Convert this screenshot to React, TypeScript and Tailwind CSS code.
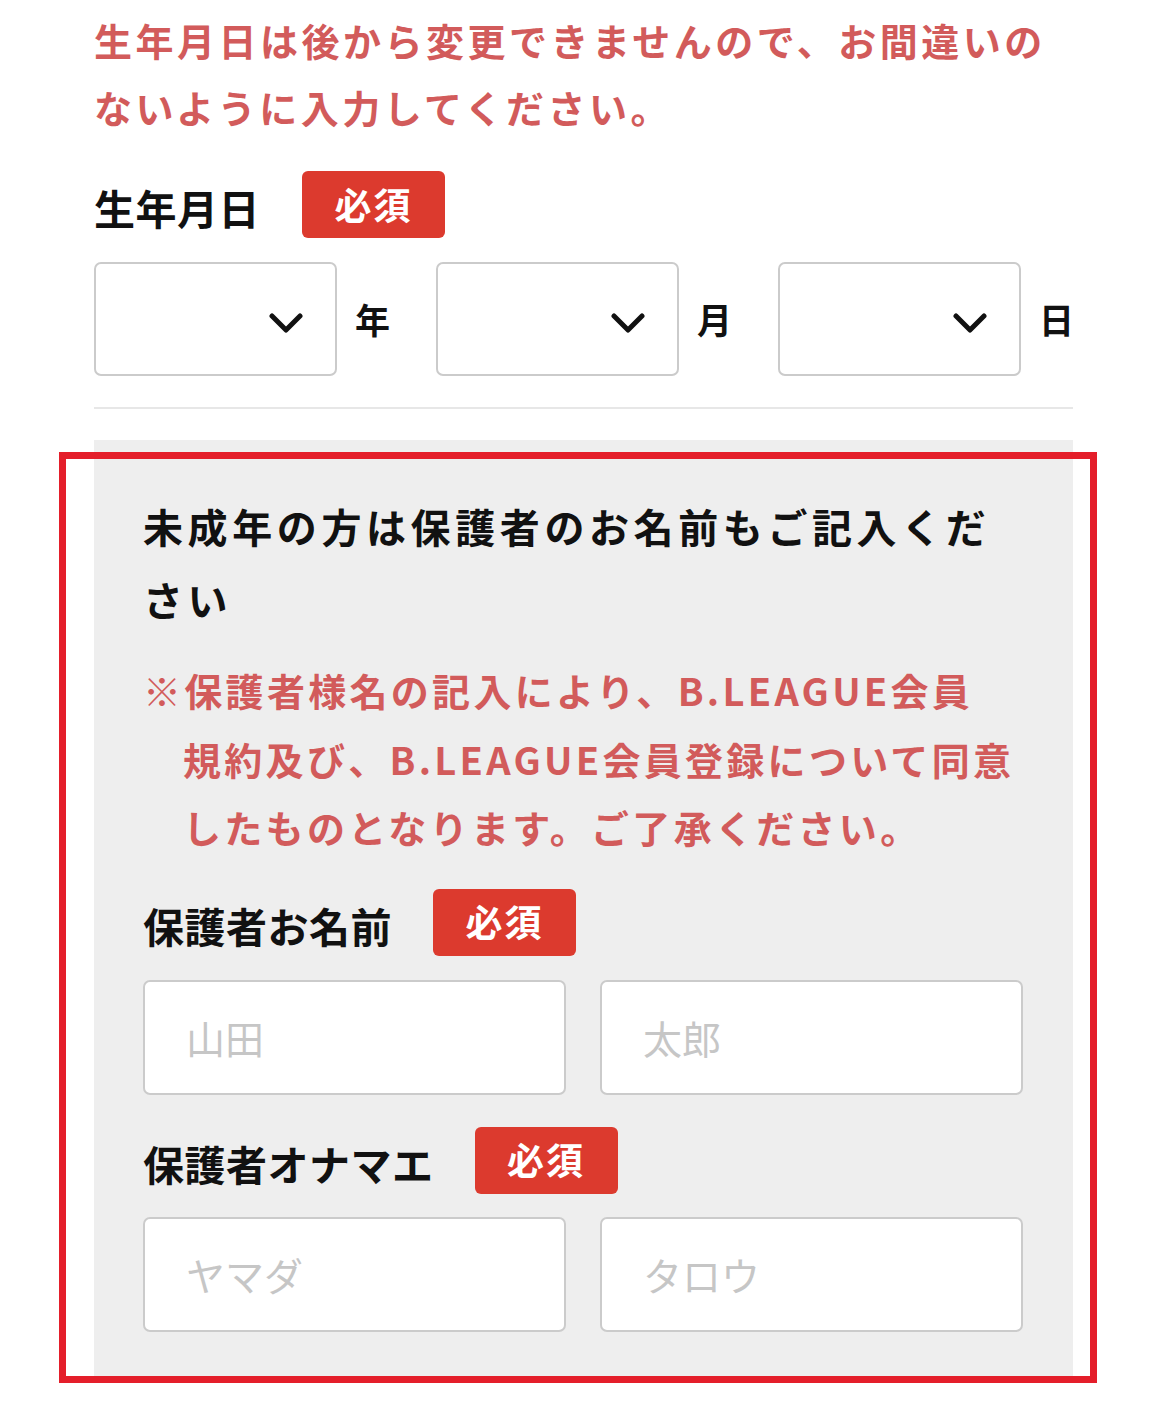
const font = { fontFamily: '"Noto Sans CJK JP", "Noto Sans", sans-serif' };

function Badge() {
  return (
    <span className="flex h-[67px] w-[143px] items-center justify-center rounded-[6px] bg-[#dc3a2e] text-[37px] font-bold tracking-[2px] text-white">
      必須
    </span>
  );
}

function Label({ text, gap = "ml-[41px]" }: { text: string; gap?: string }) {
  return (
    <div className="flex h-[67px] items-center">
      <span className="pt-[6px] text-[41px] font-bold leading-none tracking-[0.5px] text-[#111]">{text}</span>
      <span className={gap}>
        <Badge />
      </span>
    </div>
  );
}

function Chevron() {
  return (
    <svg width="34" height="20" viewBox="0 0 34 20" fill="none">
      <polyline points="3,3 17,17 31,3" stroke="#111" strokeWidth="5" strokeLinecap="round" strokeLinejoin="round" />
    </svg>
  );
}

function DateSelect({ unit }: { unit: string }) {
  return (
    <div className="flex items-center">
      <div className="flex h-[114px] w-[243px] items-center justify-end rounded-[7px] border-2 border-[#cbcbcb] bg-white pr-[32px] pt-[8px]">
        <Chevron />
      </div>
      <span className="ml-[18px] w-[34px] text-[35px] font-bold text-[#111]">{unit}</span>
    </div>
  );
}

function TextField({ placeholder }: { placeholder: string }) {
  return (
    <input
      readOnly
      placeholder={placeholder}
      className="h-[115px] w-full min-w-0 rounded-[7px] border-2 border-[#cbcbcb] bg-white pl-[41px] text-[39px] text-[#333] outline-none placeholder:text-[#c6c6c6]"
    />
  );
}

export default function App() {
  return (
    <div className="relative h-[1403px] w-[1167px] overflow-hidden bg-white" style={font}>
      <div className="px-[94px] pt-[6px]">
        <p className="text-[38px] font-bold leading-[67px] tracking-[3.5px] text-[#d25b5b]">
          生年月日は後から変更できませんので、お間違いのないように入力してください。
        </p>

        <div className="mt-[31px]">
          <Label text="生年月日" gap="ml-[42px]" />
        </div>

        <div className="mt-[24px] flex justify-between">
          <DateSelect unit="年" />
          <DateSelect unit="月" />
          <DateSelect unit="日" />
        </div>

        <div className="mt-[31px] h-[2px] bg-[#e7e7e7]" />

        <section className="mt-[31px] bg-[#eeeeee] pb-[46px] pl-[49px] pr-[50px] pt-[50px]">
          <h2 className="text-[40px] font-bold leading-[73px] tracking-[4.6px] text-[#111]">
            未成年の方は保護者のお名前もご記入ください
          </h2>
          <p className="mt-[20px] whitespace-nowrap pl-[40px] indent-[-40px] text-[38px] font-bold leading-[68.5px] tracking-[3.3px] text-[#d25b5b]">
            <span className="font-normal">※</span>保護者様名の記入により、B.LEAGUE会員
            <br />
            規約及び、B.LEAGUE会員登録について同意
            <br />
            したものとなります。ご了承ください。
          </p>

          <div className="mt-[27px]">
            <Label text="保護者お名前" />
          </div>
          <div className="mt-[24px] grid grid-cols-2 gap-[34px]">
            <TextField placeholder="山田" />
            <TextField placeholder="太郎" />
          </div>

          <div className="mt-[32px]">
            <Label text="保護者オナマエ" />
          </div>
          <div className="mt-[23px] grid grid-cols-2 gap-[34px]">
            <TextField placeholder="ヤマダ" />
            <TextField placeholder="タロウ" />
          </div>
        </section>
      </div>

      <div className="pointer-events-none absolute left-[59px] top-[452px] h-[931px] w-[1038px] border-[7px] border-[#e41e2a]" />
    </div>
  );
}
